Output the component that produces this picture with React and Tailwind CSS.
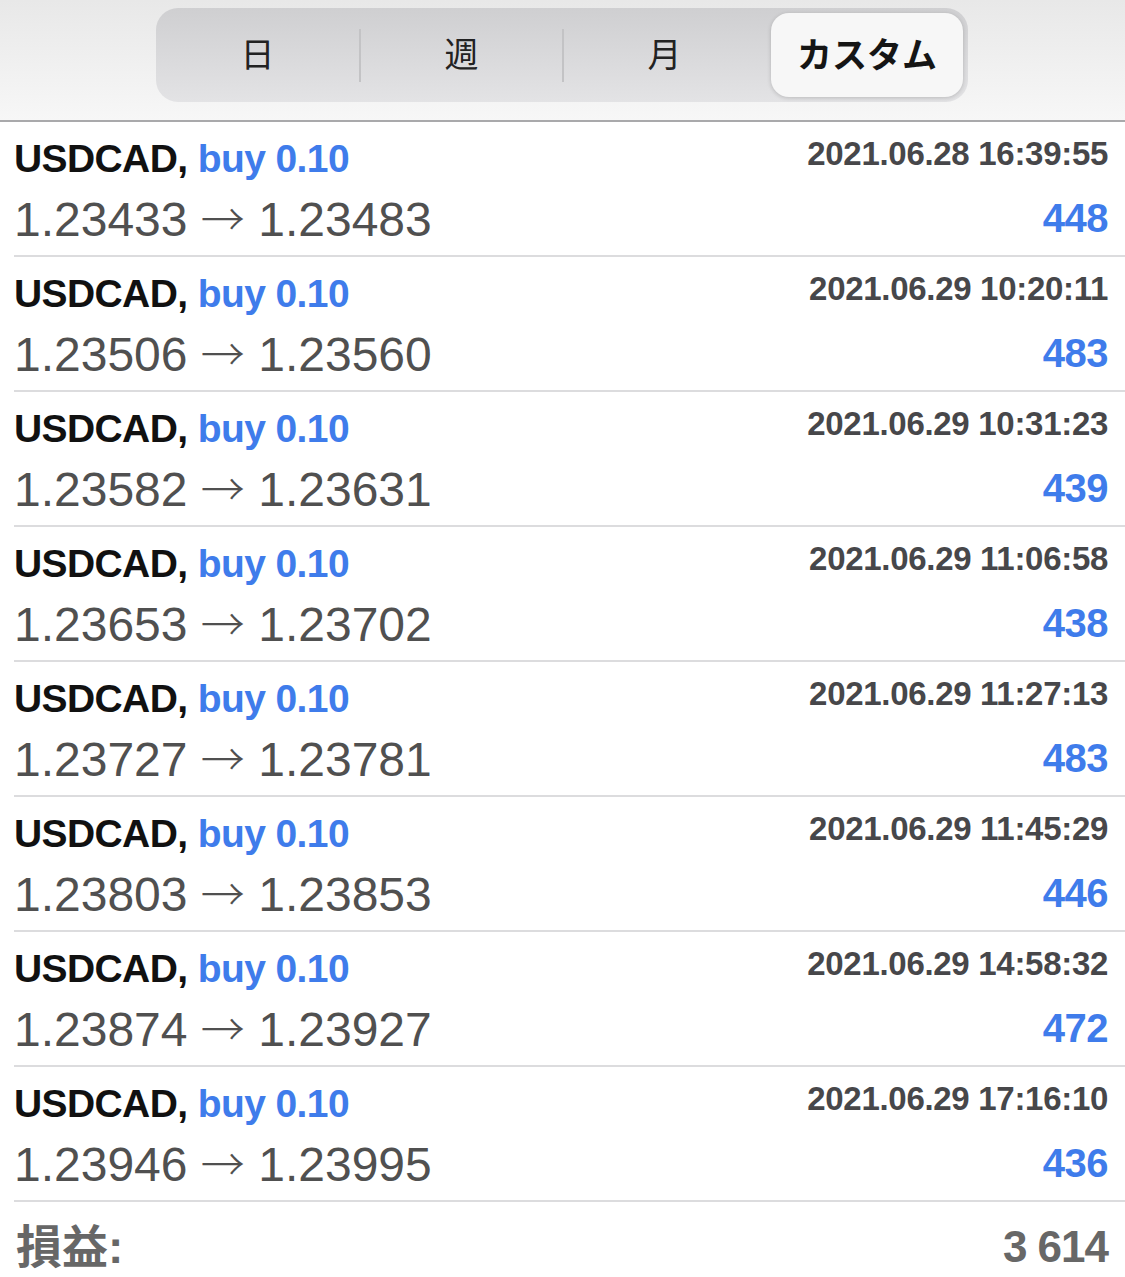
const trades = [
  { time: "2021.06.28 16:39:55", open: "1.23433", close: "1.23483", profit: "448" },
  { time: "2021.06.29 10:20:11", open: "1.23506", close: "1.23560", profit: "483" },
  { time: "2021.06.29 10:31:23", open: "1.23582", close: "1.23631", profit: "439" },
  { time: "2021.06.29 11:06:58", open: "1.23653", close: "1.23702", profit: "438" },
  { time: "2021.06.29 11:27:13", open: "1.23727", close: "1.23781", profit: "483" },
  { time: "2021.06.29 11:45:29", open: "1.23803", close: "1.23853", profit: "446" },
  { time: "2021.06.29 14:58:32", open: "1.23874", close: "1.23927", profit: "472" },
  { time: "2021.06.29 17:16:10", open: "1.23946", close: "1.23995", profit: "436" },
];

const tabs = ["日", "週", "月", "カスタム"];

function Segmented() {
  return (
    <div className="ml-[156px] mt-[7px] flex h-[94px] w-[812px] items-center rounded-[22px] bg-gradient-to-b from-[#cfcfd1] to-[#e3e3e5] font-['Noto_Sans_CJK_JP',sans-serif]">
      {tabs.map((tab, i) => {
        const active = i === tabs.length - 1;
        return (
          <div key={tab} className="flex h-full flex-1 items-center">
            {i > 0 && i < tabs.length - 1 && (
              <div className="h-[53px] w-[2px] bg-[#c3c3c5]" />
            )}
            {active ? (
              <div className="my-[5px] ml-[6px] mr-[5px] flex h-[84px] flex-1 items-center justify-center rounded-[18px] bg-[#f7f7f7] pb-[4px] text-[35px] font-bold text-[#151515] shadow-[0_1px_4px_rgba(0,0,0,0.18)]">
                {tab}
              </div>
            ) : (
              <div className="flex flex-1 items-center justify-center pb-[6px] text-[34px] text-[#222]">
                {tab}
              </div>
            )}
          </div>
        );
      })}
    </div>
  );
}

function TradeRow({ trade }) {
  return (
    <div className="pl-[14px]">
      <div className="flex h-[135px] justify-between border-b-2 border-[#dcdcde] pr-[17px]">
        <div className="pt-[17px]">
          <div className="text-[39px] font-bold leading-[39px] tracking-[-0.6px] text-[#111]">
            USDCAD, <span className="text-[#3f7ceb]">buy 0.10</span>
          </div>
          <div className="mt-[16px] text-[48px] leading-[47px] text-[#505050]">
            {trade.open}{" "}
            <span className="font-['Noto_Sans_CJK_JP',sans-serif] text-[44px] font-light">→</span>{" "}
            {trade.close}
          </div>
        </div>
        <div className="flex flex-col items-end pt-[16px]">
          <div className="text-[33px] font-bold leading-[32px] tracking-[-0.3px] text-[#47474a]">
            {trade.time}
          </div>
          <div className="mt-[28px] text-[40px] font-bold leading-[40px] tracking-[-0.5px] text-[#3f7ceb]">
            {trade.profit}
          </div>
        </div>
      </div>
    </div>
  );
}

export default function App() {
  return (
    <div className="h-[1277px] w-[1125px] overflow-hidden bg-white font-['Liberation_Sans','Noto_Sans_CJK_JP',sans-serif]">
      {/* tab header */}
      <div className="h-[122px] border-b-2 border-[#a9a9ab] bg-gradient-to-b from-[#e8e8e8] to-[#f7f7f7] pt-px">
        <Segmented />
      </div>

      {trades.map((t) => (
        <TradeRow key={t.time} trade={t} />
      ))}

      {/* total */}
      <div className="flex h-[77px] items-center justify-between pl-[16px] pr-[17px] pt-[12px] font-bold text-[#676767]">
        <span className="text-[46px] leading-[46px]">損益:</span>
        <span className="text-[44px] leading-[46px] tracking-[-1px]">3 614</span>
      </div>
    </div>
  );
}
